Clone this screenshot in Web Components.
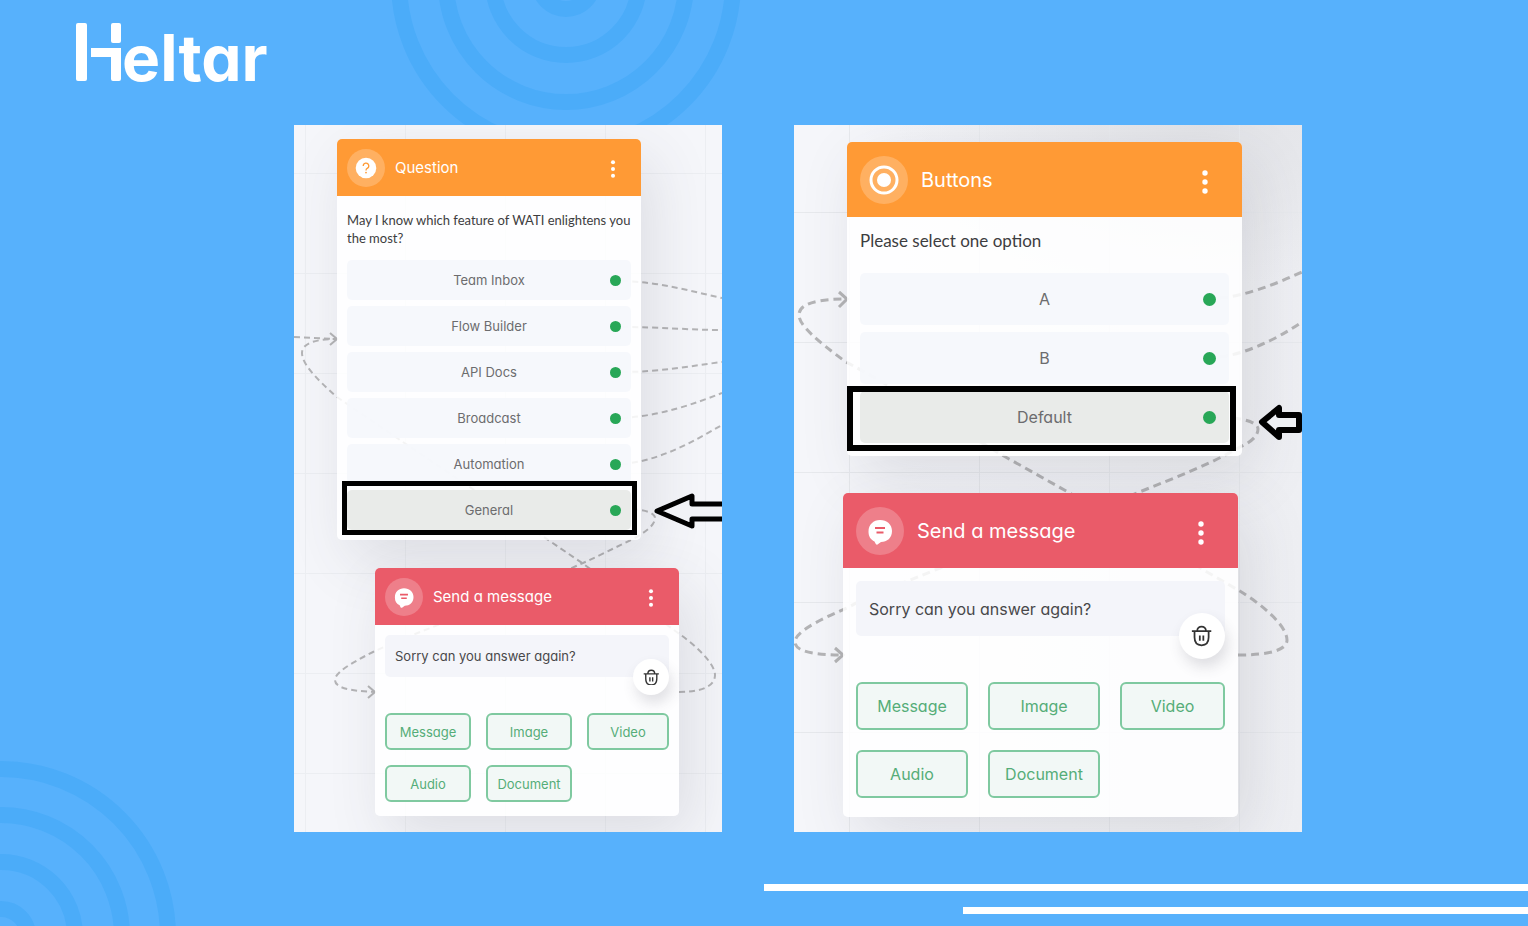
<!DOCTYPE html>
<html lang="en">
<head>
<meta charset="utf-8">
<meta name="viewport" content="width=device-width, initial-scale=1">
<title>Heltar flow builder</title>
<style>
  body {margin: 0; font-family: Inter, "Liberation Sans", sans-serif; font-feature-settings: "cv11";}
</style>
</head>
<body>

<promo-page>
  <brand-logo slot="logo">eltar</brand-logo>

  <flow-canvas style="--grow: 428">
    <svg slot="wires" fill="none">
      <path d="M328 156 C366 157 396 166 428 173"/>
      <path d="M328 202 C366 202 396 205 428 205"/>
      <path d="M328 247 C366 247 396 241 428 237"/>
      <path d="M328 293 C366 291 400 279 428 268"/>
      <path d="M328 339 C366 336 400 316 428 300"/>
      <path d="M0 212 L43 214"/>
      <path d="M385 567 C408 567 421 561 421 550 C421 538 400 519 384 508 C350 483 320 461 288 438 C240 405 120 325 43 272 C20 252 8 238 8 228 C8 218 22 214 43 214"/>
      <path d="M328 384 C352 384 361 388 361 393 C361 400 352 407 339 414 C322 422 305 431 289 438 C240 460 190 480 139 502 C118 510 98 518 79 527 C55 539 41 548 41 555 C41 563 56 566 81 567"/>
      <path class="head" d="M36 208 L43 214 L36 220 M74 561 L81 567 L74 573"/>
    </svg>
    <flow-node style="left: 43px; top: 14px" kind="question" heading="Question">
      <flow-options prompt="May I know which feature of WATI enlightens you the most?" options="Team Inbox|Flow Builder|API Docs|Broadcast|Automation|General" active="General"></flow-options>
    </flow-node>
    <flow-node style="left: 81px; top: 443px" kind="message" heading="Send a message">
      <flow-message>Sorry can you answer again?</flow-message>
    </flow-node>
    <mark-box style="left: 48px; top: 356px; width: 295px; height: 54px; --line: 5px"></mark-box>
    <svg slot="marks" fill="none">
      <path fill="#f1f2f6" stroke="#000" stroke-width="5" stroke-linejoin="round" d="M363 386 L398 371 V379 H440 V394 H398 V401 Z"/>
    </svg>
  </flow-canvas>

  <flow-canvas size="large" style="--grow: 508">
    <svg slot="wires" fill="none">
      <path d="M426 173 C450 171 480 160 508 147"/>
      <path d="M426 232 C450 229 480 216 508 197"/>
      <path d="M444 530 C476 530 493 525 493 515 C493 500 466 478 444 465 L413 447 C370 420 320 394 274 367 L208 330 C150 295 100 262 52 237 C22 215 5 200 5 190 C5 178 25 174 53 174"/>
      <path d="M426 292 C452 293 464 298 464 304 C464 312 455 318 446 322 C415 340 380 353 343 368 C280 393 210 418 146 443 C110 458 80 468 55 482 C20 497 1 508 1 517 C1 527 22 530 49 530"/>
      <path class="head" d="M45 167 L53 174 L45 182 M41 523 L49 530 L41 537"/>
    </svg>
    <flow-node style="left: 53px; top: 17px" kind="buttons" heading="Buttons">
      <flow-options prompt="Please select one option" options="A|B|Default" active="Default"></flow-options>
    </flow-node>
    <flow-node style="left: 49px; top: 368px" kind="message" heading="Send a message">
      <flow-message>Sorry can you answer again?</flow-message>
    </flow-node>
    <mark-box style="left: 53px; top: 261px; width: 389px; height: 65px; --line: 6px"></mark-box>
    <svg slot="marks" fill="none">
      <path fill="#eef0f4" stroke="#000" stroke-width="6" stroke-linejoin="round" d="M468 297 L485 283 V290 H505 V305 H485 V312 Z"/>
    </svg>
  </flow-canvas>
</promo-page>

<script>
const icons = {
  question: `
    <circle cx="24" cy="24" r="13" fill="#fff"/>
    <path d="M20.5 21.5 a3.5 3.5 0 1 1 5 3 q-1.5 .8 -1.5 2.5" fill="none" stroke="#ff9a35" stroke-width="1.6"/>
    <circle cx="24" cy="29.8" r="1.1" fill="#ff9a35"/>`,
  buttons: `
    <circle cx="24" cy="24" r="13" fill="none" stroke="#fff" stroke-width="3"/>
    <circle cx="24" cy="24" r="7" fill="#fff"/>`,
  message: `
    <path d="M24 13 c7 0 12 4.500 12 11 c0 7 -5 11 -11 11 l-3.500 2.500 c-1 .5 -1.500 0 -2 -1 l-1 -2 c-4 -2 -6 -5 -6 -10 c0 -7 5 -11.500 11.500 -11.500 Z" fill="#fff"/>
    <path d="M19 21 h10 M20.500 25.500 h7" fill="none" stroke="#ea5b69" stroke-width="2"/>`
}

// attaches an open root with the given markup
const render = (el, html) => {
  el.attachShadow({ mode: 'open' }).innerHTML = html
}

customElements.define(
  'promo-page',
  class extends HTMLElement {
    constructor() {
      super()
      render(this, `
        <svg class="rings" width="352" height="176" fill="none" viewBox="390 0 352 176">
          <circle cx="566" cy="-18" r="27"/><circle cx="566" cy="-18" r="73"/>
          <circle cx="566" cy="-18" r="120"/><circle cx="566" cy="-18" r="167"/>
        </svg>
        <svg class="rings corner" width="180" height="170" fill="none" viewBox="0 756 180 170">
          <circle cx="1" cy="936" r="27"/><circle cx="1" cy="936" r="74"/>
          <circle cx="1" cy="936" r="121"/><circle cx="1" cy="936" r="167"/>
        </svg>
        <header><slot name="logo"></slot></header>
        <main><slot></slot></main>
        <footer><div class="bar"></div><div class="bar short"></div></footer>
        <style>
          :host {display: flex; flex-direction: column; position: relative; min-height: 100vh; background: #57b1fc; overflow: hidden;}
          .rings {position: absolute; left: 390px; top: 0; stroke: #4bacf9; stroke-width: 16;}
          .corner {left: 0; top: auto; bottom: 0;}
          header {box-sizing: border-box; height: 125px; padding: 23px 76px 0;}
          main {position: relative; display: flex; gap: 72px; padding: 0 226px 0 294px;}
          footer {display: flex; flex-direction: column; align-items: flex-end; gap: 16px; padding: 52px 0 12px;}
          .bar {width: 50%; height: 7px; background: #fff;}
          .short {width: 37%;}
        </style>
      `)
    }
  }
)

customElements.define(
  'brand-logo',
  class extends HTMLElement {
    constructor() {
      super()
      render(this, `
        <svg width="46" height="58" viewBox="0 0 46 58" fill="#fff">
          <rect width="11" height="58" rx="2"/>
          <rect x="35" width="10" height="20" rx="2"/>
          <path d="M15 25 H45 V56 q0 2 -2 2 H37 q-2 0 -2 -2 V34 H15 Z"/>
        </svg>
        <slot></slot>
        <style>
          :host {display: flex; align-items: baseline; color: #fff; font-size: 64px; line-height: 58px; font-weight: 700;}
        </style>
      `)
    }
  }
)

customElements.define(
  'flow-canvas',
  class extends HTMLElement {
    constructor() {
      super()
      render(this, `
        <slot name="wires"></slot>
        <slot></slot>
        <slot name="marks"></slot>
        <style>
          :host {
            --node: 304px; --head: 57px; --pad: 10px; --badge: 38px; --menu: 18px; --menu-pad: 16px;
            --title: 15px; --text: 13px; --prompt: 13px; --prompt-line: 18px; --prompt-top: 15px; --prompt-gap: 13px;
            --row: 40px; --row-gap: 6px; --dot: 11px; --dot-pad: 10px;
            --box: 42px; --box-gap: 36px; --btn: 86px; --btn-height: 37px; --btn-gap: 15px; --bottom: 14px; --bin: 36px;
            --cell: 100px; --grid: 11px 48px;
            flex: var(--grow) 1 0px; position: relative; height: 707px; overflow: hidden;
            background:
              linear-gradient(#eceef2 1px, transparent 1px) var(--grid) / var(--cell) var(--cell),
              linear-gradient(90deg, #eceef2 1px, transparent 1px) var(--grid) / var(--cell) var(--cell),
              #f5f6fa;
          }
          :host([size="large"]) {
            --node: 395px; --head: 75px; --pad: 13px; --badge: 48px; --menu: 24px; --menu-pad: 25px;
            --title: 20px; --text: 16px; --prompt: 17px; --prompt-line: 24px; --prompt-top: 12px; --prompt-gap: 20px;
            --row: 52px; --row-gap: 7px; --dot: 13px; --dot-pad: 13px;
            --box: 55px; --box-gap: 46px; --btn: 112px; --btn-height: 48px; --btn-gap: 20px; --bottom: 19px; --bin: 46px;
            --cell: 130px; --grid: 55px 87px;
            background:
              linear-gradient(#e7e9ed 1px, transparent 1px) var(--grid) / var(--cell) var(--cell),
              linear-gradient(90deg, #e7e9ed 1px, transparent 1px) var(--grid) / var(--cell) var(--cell),
              radial-gradient(ellipse 340px 160px at 80% 0, #e2e3e7, transparent),
              linear-gradient(90deg, #f5f6fa 20%, #eeeff3);
          }
          ::slotted(svg) {position: absolute; left: 0; top: 0; width: 100%; height: 100%; pointer-events: none;}
          ::slotted(svg[slot="wires"]) {stroke: #b4b4b6; stroke-width: 2; stroke-dasharray: 6 4;}
          :host([size="large"]) ::slotted(svg[slot="wires"]) {stroke-width: 3; stroke-dasharray: 8 5;}
        </style>
      `)
      this.querySelectorAll('.head').forEach(head => head.setAttribute('stroke-dasharray', 'none'))
    }
  }
)

customElements.define(
  'flow-node',
  class extends HTMLElement {
    constructor() {
      super()
      render(this, `
        <header>
          <svg class="badge" viewBox="0 0 48 48"><circle cx="24" cy="24" r="24" fill="#fff" fill-opacity=".22"/>${icons[this.getAttribute('kind')]}</svg>
          <span>${this.getAttribute('heading')}</span>
          <button type="button" aria-label="Menu">
            <svg viewBox="0 0 24 24" fill="#fff"><circle cx="12" cy="3" r="2.700"/><circle cx="12" cy="12" r="2.700"/><circle cx="12" cy="21" r="2.700"/></svg>
          </button>
        </header>
        <slot></slot>
        <style>
          :host {position: absolute; display: block; width: var(--node); border-radius: 5px; background: rgba(255, 255, 255, .85); box-shadow: 12px 20px 60px rgba(60, 60, 75, .13);}
          header {box-sizing: border-box; display: flex; align-items: center; gap: var(--pad); height: var(--head); padding: 0 var(--menu-pad) 0 var(--pad); border-radius: 5px 5px 0 0; background: #ff9a35; color: #fff; font-size: var(--title);}
          :host([kind="message"]) header {background: #ea5b69;}
          .badge {width: var(--badge); height: var(--badge);}
          span {flex: 1;}
          button {display: grid; place-items: center; width: 24px; height: 24px; padding: 2px 0 0; border: 0; background: none;}
          button svg {width: var(--menu); height: var(--menu);}
        </style>
      `)
    }
  }
)

customElements.define(
  'flow-options',
  class extends HTMLElement {
    constructor() {
      super()
      const active = this.getAttribute('active')
      const rows = this.getAttribute('options').split('|')
        .map(name => `<li${name === active ? ' class="active"' : ''}><span>${name}</span><i></i></li>`)
      render(this, `
        <p>${this.getAttribute('prompt')}</p>
        <ul>${rows.join('')}</ul>
        <style>
          :host {display: block; padding: var(--prompt-top) var(--pad) var(--pad);}
          p {margin: 0 0 var(--prompt-gap); color: #3d3d40; font-family: Lato, "Open Sans", sans-serif; font-size: var(--prompt); line-height: var(--prompt-line);}
          ul {display: grid; gap: var(--row-gap); margin: 0; padding: 0; list-style: none;}
          li {box-sizing: border-box; display: grid; grid-template-columns: 1fr auto 1fr; align-items: center; height: var(--row); padding: 0 var(--dot-pad); border-radius: 5px; background: rgba(245, 247, 252, .85); color: #6c6c6e; font-size: var(--text);}
          .active {background: rgba(231, 233, 231, .93);}
          span {grid-column: 2;}
          i {justify-self: end; width: var(--dot); height: var(--dot); border-radius: 50%; background: #28a757;}
        </style>
      `)
    }
  }
)

customElements.define(
  'flow-message',
  class extends HTMLElement {
    constructor() {
      super()
      const buttons = ['Message', 'Image', 'Video', 'Audio', 'Document']
        .map(name => `<button type="button">${name}</button>`)
      render(this, `
        <div class="box">
          <slot></slot>
          <button class="bin" type="button" aria-label="Delete">
            <svg viewBox="0 0 24 24" fill="none" stroke="#333" stroke-width="2"><path d="M1 7 H23 M7 7 C7 0 17 0 17 7 M4 7 V14 C4 20 6 23 12 23 C18 23 20 20 20 14 V7 M10 12 V18 M14 12 V18"/></svg>
          </button>
        </div>
        <div class="types">${buttons.join('')}</div>
        <style>
          :host {display: block; padding: var(--pad) var(--pad) var(--bottom);}
          .box {position: relative; box-sizing: border-box; display: flex; align-items: center; height: var(--box); margin-bottom: var(--box-gap); padding: 0 var(--pad); border-radius: 5px; background: #f4f5fa; color: #48484a; font-size: var(--text);}
          button {padding: 0; font: inherit; font-feature-settings: inherit;}
          .bin {position: absolute; right: 0; bottom: calc(var(--bin) / -2); display: grid; place-items: center; width: var(--bin); height: var(--bin); border: 0; border-radius: 50%; background: #fff; box-shadow: 3px 8px 14px rgba(60, 60, 80, .16);}
          .bin svg {width: 46%; height: 46%;}
          .types {display: grid; grid-template-columns: var(--btn) var(--btn) 1fr; gap: var(--btn-gap); font-size: var(--text);}
          .types button {height: var(--btn-height); border: 2px solid #7fc9a0; border-radius: 6px; background: #f2f8f6; color: #55ad78;}
        </style>
      `)
    }
  }
)

customElements.define(
  'mark-box',
  class extends HTMLElement {
    constructor() {
      super()
      render(this, `
        <style>
          :host {position: absolute; box-sizing: border-box; border: var(--line) solid #000;}
        </style>
      `)
    }
  }
)
</script>
</body>
</html>
